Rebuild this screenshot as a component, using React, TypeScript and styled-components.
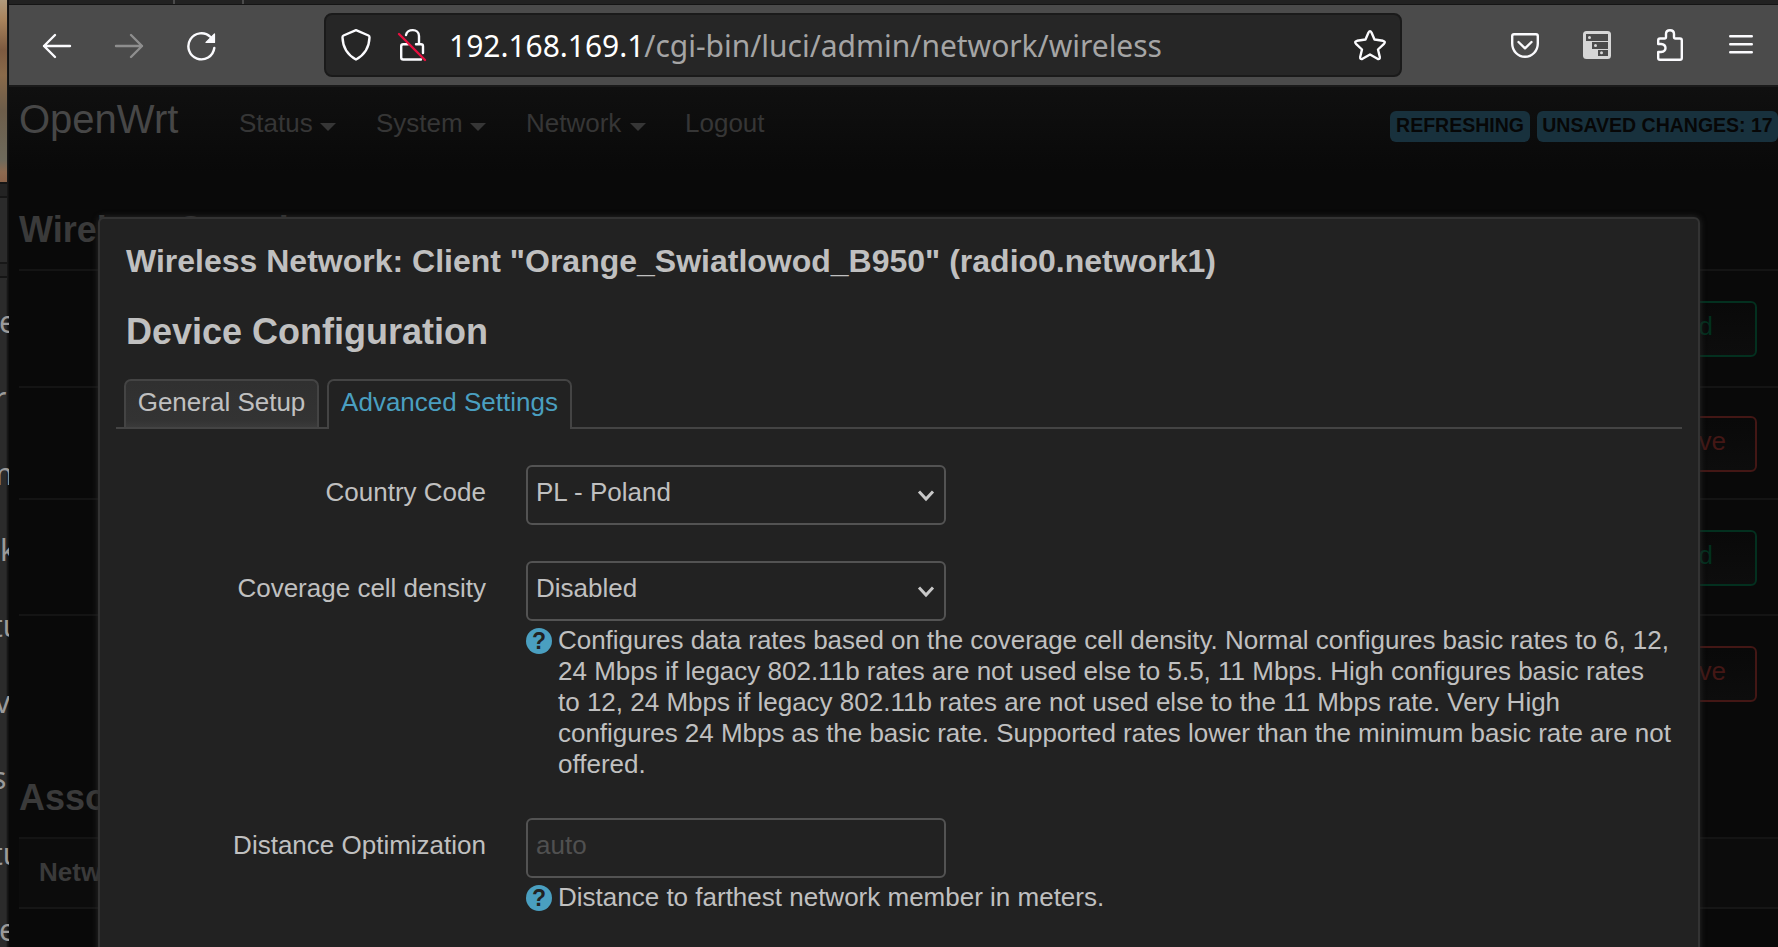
import React from 'react';
import styled, { createGlobalStyle } from 'styled-components';

const Global = createGlobalStyle`
  * { box-sizing: border-box; }
  html, body { margin: 0; padding: 0; background: #090909; overflow: hidden; }
`;

const sans = `'Liberation Sans', Arial, sans-serif`;

const Screen = styled.div`
  position: relative;
  display: flex;
  width: 1778px;
  height: 947px;
  overflow: hidden;
  background: #090909;
  font-family: ${sans};
  font-size: 26px;
`;

const Behind = styled.aside`
  display: flex;
  flex-direction: column;
  width: 9px;
  flex: none;
  height: 947px;
  overflow: hidden;
  background: linear-gradient(90deg, #2b2b2b 0 6px, #101010 8px);
`;

const Photo = styled.div`
  flex: none;
  height: 182px;
  width: 7px;
  background: linear-gradient(180deg, #b09a7c 0, #a8835c 20px, #7d5a40 50px, #8a6a4a 75px, #6d5d4a 110px, #6e6a5c 160px, #8d6a50 172px, #8a6249 182px);
`;

const BehindHead = styled.div`
  flex: none;
  height: 98px;
  width: 7px;
  border-top: 2px solid #151515;
  background: linear-gradient(180deg, #232323 0 12px, #161616 12px 14px, #2b2b2b 14px 78px, #171717 78px 80px, #262626 80px 92px, #151515 92px 94px, #2b2b2b 94px);
`;

const BehindLine = styled.div<{ $shift: number }>`
  flex: none;
  height: 76px;
  width: 9px;
  padding-top: 24px;
  overflow: hidden;
  font: 30px/36px 'Noto Sans', sans-serif;
  text-indent: ${p => p.$shift}px;
  white-space: nowrap;
  color: #9a9a9a;
`;

const Window = styled.div`
  flex: 1;
  min-width: 0;
  display: flex;
  flex-direction: column;
`;

const TabEdge = styled.div`
  flex: none;
  display: flex;
  height: 5px;
  padding-left: 164px;
  background: #222;
  border-bottom: 1px solid #151515;
`;

const TabTick = styled.i`
  width: 2px;
  height: 4px;
  margin-right: 67px;
  background: #4b4b4b;
`;

const Toolbar = styled.header`
  flex: none;
  display: flex;
  align-items: center;
  height: 82px;
  background: #4b4b4b;
  border-bottom: 2px solid #1a1a1a;
`;

const Glyph = styled.svg<{ $ml?: number; $tone?: string }>`
  flex: none;
  display: block;
  margin-left: ${p => p.$ml ?? 0}px;
  fill: none;
  stroke: ${p => p.$tone ?? '#fbfbfe'};
  stroke-width: 2.4;
  stroke-linecap: round;
  stroke-linejoin: round;
`;

const Slash = styled.path`
  stroke: #e8103f;
`;

const UrlBar = styled.div`
  display: flex;
  align-items: center;
  flex: none;
  width: 1078px;
  height: 64px;
  margin-left: 106px;
  border: 2px solid #1a1a1a;
  border-radius: 8px;
  background: #262626;
`;

const Url = styled.div`
  width: 904px;
  margin-left: 22px;
  padding-top: 1px;
  font: 30px/60px 'Noto Sans', sans-serif;
  letter-spacing: -0.03px;
  white-space: nowrap;
  color: #a5a5a5;
  b { font-weight: 400; color: #fff; }
`;

const Page = styled.main`
  flex: 1;
  min-height: 0;
  overflow: hidden;
  background: linear-gradient(180deg, #101010 0, #090909 85px);
`;

const Nav = styled.nav`
  display: flex;
  height: 76px;
  padding-left: 10px;
  color: #363636;
  line-height: 30px;
`;

const Brand = styled.div`
  width: 220px;
  padding-top: 10px;
  font-size: 40px;
  line-height: 44px;
  color: #474747;
`;

const NavItem = styled.div<{ $w: number; $gap?: number }>`
  display: flex;
  width: ${p => p.$w}px;
  padding-top: 21px;
  gap: ${p => p.$gap ?? 7}px;
`;

const Caret = styled.i`
  margin-top: 15px;
  height: 0;
  border: 8px solid transparent;
  border-top-color: #363636;
  border-bottom: 0;
`;

const Badges = styled.div`
  display: flex;
  gap: 7px;
  margin-left: auto;
  padding-top: 24px;
`;

const Badge = styled.span<{ $w: number }>`
  width: ${p => p.$w}px;
  height: 31px;
  border-radius: 6px;
  background: #18313d;
  color: #070707;
  font-size: 19.5px;
  font-weight: 700;
  line-height: 28px;
  text-align: center;
  white-space: nowrap;
`;

const Heading = styled.h2<{ $h: number; $pt: number }>`
  margin: 0 0 0 10px;
  height: ${p => p.$h}px;
  padding-top: ${p => p.$pt}px;
  font-size: 36px;
  line-height: 40px;
  color: #3a3a3a;
`;

const Row = styled.div<{ $h: number; $pt: number }>`
  display: flex;
  justify-content: flex-end;
  height: ${p => p.$h}px;
  margin-left: 10px;
  padding: ${p => p.$pt}px 21px 0 0;
  border-top: 2px solid #141414;
`;

const RowButton = styled.span<{ $remove?: boolean }>`
  width: 180px;
  height: 56px;
  padding-right: ${p => (p.$remove ? 29 : 42)}px;
  border: 2px solid ${p => (p.$remove ? '#431715' : '#03301f')};
  border-radius: 6px;
  color: ${p => (p.$remove ? '#431715' : '#03301f')};
  background: linear-gradient(180deg, #090909, #0d0d0d);
  line-height: 46px;
  text-align: right;
`;

const TableHead = styled.div`
  height: 72px;
  margin-left: 10px;
  padding: 18px 0 0 20px;
  border-top: 2px solid #141414;
  border-bottom: 2px solid #161616;
  background: #0c0c0c;
  color: #3a3a3a;
  font-weight: 700;
  line-height: 30px;
`;

const Modal = styled.section`
  position: absolute;
  left: 98px;
  top: 217px;
  width: 1602px;
  height: 760px;
  padding: 0 16px;
  border: 2px solid #333;
  border-radius: 6px;
  background: #222;
  box-shadow: 0 0 6px #2a2a2a;
  color: #c0c0c0;
`;

const Title = styled.h4`
  margin: 0;
  padding: 22px 0 1px 10px;
  font-size: 32px;
  line-height: 40px;
  white-space: nowrap;
`;

const Subtitle = styled.h3`
  margin: 0;
  padding: 28px 0 0 10px;
  height: 97px;
  font-size: 36px;
  line-height: 44px;
`;

const Tabs = styled.div`
  display: flex;
  height: 50px;
  margin: 0;
  padding-left: 8px;
  gap: 8px;
  border-bottom: 2px solid #444;
`;

const Tab = styled.span<{ $active?: boolean; $w: number }>`
  width: ${p => p.$w}px;
  height: ${p => (p.$active ? 50 : 48)}px;
  border: 2px solid #444;
  border-bottom: 0;
  border-radius: 7px 7px 0 0;
  background: ${p => (p.$active ? '#222' : 'linear-gradient(180deg, #303030, #333 85%, #3a3a3a)')};
  color: ${p => (p.$active ? '#4a9fc0' : '#c0c0c0')};
  line-height: 42px;
  text-align: center;
  white-space: nowrap;
`;

const Field = styled.div<{ $mt: number }>`
  display: flex;
  margin-top: ${p => p.$mt}px;
`;

const Label = styled.label`
  width: 370px;
  margin-right: 40px;
  padding-top: 12px;
  line-height: 30px;
  text-align: right;
`;

const Box = styled.div<{ $dim?: boolean }>`
  display: flex;
  justify-content: space-between;
  width: 420px;
  height: 60px;
  padding: 10px 9px 0 8px;
  border: 2px solid #535353;
  border-radius: 6px;
  color: ${p => (p.$dim ? '#505050' : '#c0c0c0')};
  line-height: 30px;
`;

const Chevron = styled.svg`
  margin-top: 13px;
  fill: none;
  stroke: #c8c8c8;
  stroke-width: 3;
`;

const Help = styled.div`
  display: flex;
  gap: 6px;
  padding-top: 4px;
  line-height: 31px;
  white-space: nowrap;
`;

const HelpLine = styled.div<{ $tight?: boolean }>`
  letter-spacing: ${p => (p.$tight ? '-0.03px' : 'normal')};
`;

const HelpDot = styled.span`
  flex: none;
  width: 26px;
  height: 26px;
  margin-top: 3px;
  border-radius: 50%;
  background: #4a9fc0;
  color: #222;
  font: 700 23px/26px ${sans};
  text-align: center;
`;

const Select = ({ value }: { value: string }) => (
  <Box>
    {value}
    <Chevron width="18" height="12" viewBox="0 0 18 12"><path d="M2 1.5L9 9L16 1.5" /></Chevron>
  </Box>
);

const fragments: [string, number][] = [
  ['e', -1], ['r', -6], ['m', -15], ['k', 0], ['tu', -8], ['v', -5], ['s', -8], ['tu', -8], ['e', -1],
];

const Icon = ({ ml, d, tone, children }: { ml: number; d?: string; tone?: string; children?: React.ReactNode }) => (
  <Glyph $ml={ml} $tone={tone} width="32" height="32" viewBox="0 0 32 32">
    {d && <path d={d} />}
    {children}
  </Glyph>
);

export default function App() {
  return (
    <Screen>
      <Global />
      <Behind>
        <Photo />
        <BehindHead />
        {fragments.map(([t, shift], i) => <BehindLine key={i} $shift={shift}>{t}</BehindLine>)}
      </Behind>
      <Window>
        <TabEdge><TabTick /><TabTick /></TabEdge>
        <Toolbar>
          <Icon ml={32} d="M29 17H3M14 6L3 17L14 28" />
          <Icon ml={41} tone="#8e8e8e" d="M2 17H28M17 6L28 17L17 28" />
          <Icon ml={40} d="M28.3 19A13 13 0 1 1 24.5 8">
            <path d="M28.500 5V13.500H20Z" fill="#fbfbfe" strokeWidth="1.200" />
          </Icon>
          <UrlBar>
            <Glyph $ml={13} width="32" height="36" viewBox="0 0 32 36"><path d="M17 3.200L29.500 8.500Q30.600 9 30.500 10.500C30.200 20 27 27 17 32.500C7 27 3.800 20 3.500 10.500Q3.400 9 4.500 8.500Z" /></Glyph>
            <Glyph $ml={24} width="32" height="36" viewBox="0 0 32 36">
              <path d="M11 8C12 1.500 24 1.200 24 9V17M13 17.200H8.200Q6.200 17.200 6.200 19.200V30.500Q6.200 32.500 8.200 32.500H26M21 17.200H26Q28 17.200 28 19.200V26" />
              <Slash d="M4 7L30 33" />
            </Glyph>
            <Url><b>192.168.169.1</b>/cgi-bin/luci/admin/network/wireless</Url>
            <Glyph width="34" height="34" viewBox="0 0 34 34"><path d="M15.500 4.500Q17 1.800 18.500 4.500L21.500 11.500L30 12.800Q33 13.500 31 15.800L25 21.500L26.800 29Q27 31.800 24.500 30.800L17 26.500L9.500 30.800Q7 31.800 7.200 29L9 21.500L3 15.800Q1 13.500 4 12.800L12.500 11.500Z" /></Glyph>
          </UrlBar>
          <Icon ml={107} d="M5 5.200H27Q28.800 5.200 28.800 7V14.500C28.800 22 23 27.800 16 27.800C9 27.800 3.200 22 3.200 14.500V7Q3.200 5.200 5 5.200ZM9.500 13L16 19.300L22.500 13" />
          <Icon ml={40} tone="none">
            <rect x="2" y="2" width="28" height="28" rx="3.500" fill="#d6d6d6" />
            <path d="M5 5H27V12H5ZM11 13H27V20H11ZM17 21H27V27H17Z" fill="#4b4b4b" />
            <circle cx="8.500" cy="8.500" r="1.500" fill="#d6d6d6" />
            <circle cx="14.500" cy="16.500" r="1.500" fill="#d6d6d6" />
            <circle cx="20.500" cy="23.700" r="1.500" fill="#d6d6d6" />
          </Icon>
          <Icon ml={42} d="M5 9.500H9.500Q11 9.500 11 8V5Q11 1.300 15 1.300Q19 1.300 19 5V8Q19 9.500 20.500 9.500H25Q26.800 9.500 26.800 11.500V29Q26.800 30.800 25 30.800H5Q3.200 30.800 3.200 29V23H6Q10.500 22.500 10.500 19Q10.500 15.500 6 15H3.200V11.500Q3.200 9.500 5 9.500Z" />
          <Icon ml={38} d="M5.200 7.200H26.800M5.200 15.200H26.800M5.200 23.200H26.800" />
        </Toolbar>
        <Page>
          <Nav>
            <Brand>OpenWrt</Brand>
            <NavItem $w={137}>Status<Caret /></NavItem>
            <NavItem $w={150}>System<Caret /></NavItem>
            <NavItem $w={159} $gap={9}>Network<Caret /></NavItem>
            <NavItem $w={100}>Logout</NavItem>
            <Badges>
              <Badge $w={140}>REFRESHING</Badge>
              <Badge $w={241}>UNSAVED CHANGES: 17</Badge>
            </Badges>
          </Nav>
          <Heading $h={106} $pt={47}>Wireless Overview</Heading>
          <Row $h={117} $pt={30}><RowButton>Add</RowButton></Row>
          <Row $h={112} $pt={28}><RowButton $remove>Remove</RowButton></Row>
          <Row $h={116} $pt={30}><RowButton>Add</RowButton></Row>
          <Row $h={88} $pt={30}><RowButton $remove>Remove</RowButton></Row>
          <Heading $h={135} $pt={76}>Associated Stations</Heading>
          <TableHead>Network</TableHead>
        </Page>
      </Window>
      <Modal>
        <Title>Wireless Network: Client "Orange_Swiatlowod_B950" (radio0.network1)</Title>
        <Subtitle>Device Configuration</Subtitle>
        <Tabs>
          <Tab $w={195}>General Setup</Tab>
          <Tab $w={245} $active>Advanced Settings</Tab>
        </Tabs>
        <Field $mt={36}>
          <Label>Country Code</Label>
          <Select value="PL - Poland" />
        </Field>
        <Field $mt={36}>
          <Label>Coverage cell density</Label>
          <div>
            <Select value="Disabled" />
            <Help>
              <HelpDot>?</HelpDot>
              <div>
                <HelpLine $tight>Configures data rates based on the coverage cell density. Normal configures basic rates to 6, 12,</HelpLine>
                <HelpLine>24 Mbps if legacy 802.11b rates are not used else to 5.5, 11 Mbps. High configures basic rates</HelpLine>
                <HelpLine>to 12, 24 Mbps if legacy 802.11b rates are not used else to the 11 Mbps rate. Very High</HelpLine>
                <HelpLine $tight>configures 24 Mbps as the basic rate. Supported rates lower than the minimum basic rate are not</HelpLine>
                <HelpLine>offered.</HelpLine>
              </div>
            </Help>
          </div>
        </Field>
        <Field $mt={38}>
          <Label>Distance Optimization</Label>
          <div>
            <Box $dim>auto</Box>
            <Help>
              <HelpDot>?</HelpDot>
              <HelpLine>Distance to farthest network member in meters.</HelpLine>
            </Help>
          </div>
        </Field>
      </Modal>
    </Screen>
  );
}
